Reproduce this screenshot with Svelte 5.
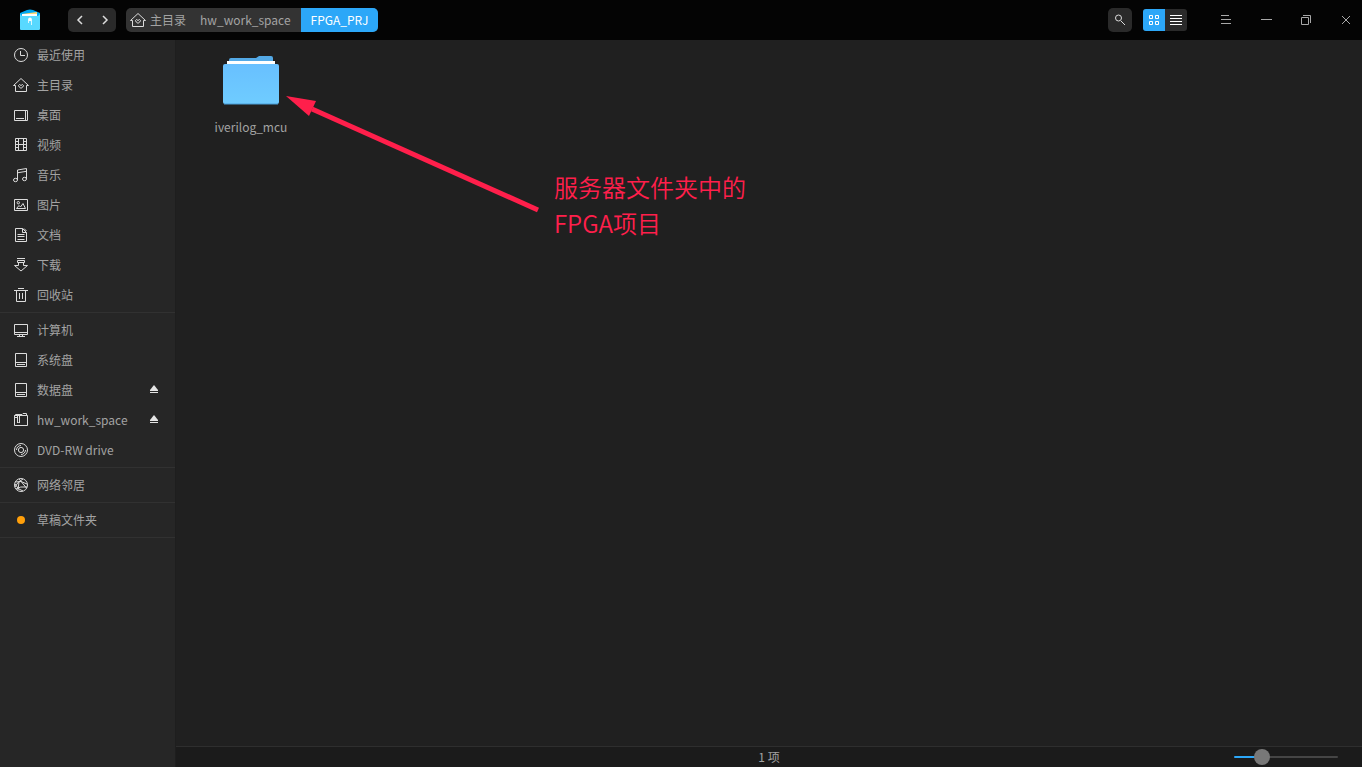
<script lang="ts">
  type Place = { label: string; icon: string; ejectable?: boolean }

  const groups: Place[][] = [
    [
      { label: '最近使用', icon: 'recent' },
      { label: '主目录', icon: 'home' },
      { label: '桌面', icon: 'desktop' },
      { label: '视频', icon: 'video' },
      { label: '音乐', icon: 'music' },
      { label: '图片', icon: 'picture' },
      { label: '文档', icon: 'document' },
      { label: '下载', icon: 'download' },
      { label: '回收站', icon: 'trash' },
    ],
    [
      { label: '计算机', icon: 'computer' },
      { label: '系统盘', icon: 'disk' },
      { label: '数据盘', icon: 'disk', ejectable: true },
      { label: 'hw_work_space', icon: 'share', ejectable: true },
      { label: 'DVD-RW drive', icon: 'dvd' },
    ],
    [{ label: '网络邻居', icon: 'network' }],
    [{ label: '草稿文件夹', icon: 'tag' }],
  ]

  // Line icons, one path each on a 16px grid.
  const icons: Record<string, string> = {
    recent: 'M14.5 8a6.5 6.5 0 1 1-13 0a6.5 6.5 0 1 1 13 0M7.5 4v4.5H12',
    home: 'M.5 8.5L8 1.5L15.5 8.5H13.5V14.5H2.5V8.5ZM5.5 8.5L6.5 7.5L8 8.5L9.5 7.5L10.5 8.5L9.8 10L8 11.3L6.2 10Z',
    desktop: 'M1.5 3.5h13v10h-13zM12.5 3.5v10M3 11.5h8',
    video: 'M2.5 1.5h11v12h-11zM5.5 1.5v12M10.5 1.5v12M5.5 7.5h5M2.5 4.5h3M2.5 7.5h3M2.5 10.5h3M10.5 4.5h3M10.5 7.5h3M10.5 10.5h3',
    music: 'M4.5 13a2 1.7 0 1 1-4 0a2 1.7 0 1 1 4 0V3L13.5 1.5V12a2 1.7 0 1 1-4 0a2 1.7 0 1 1 4 0M4.5 5.8L13.5 4.3',
    picture: 'M1.5 2.5h13v11h-13zM6.5 5.7a1.2 1.2 0 1 1-2.4 0a1.2 1.2 0 1 1 2.4 0M3.5 11.5L6 8.5L7.5 10L10 6.5L12.5 11.5Z',
    document: 'M9.5 1.5H2.5V14.5H13.5V5.5L9.5 1.5V5.5H13.5M4.5 7.5h7M4.5 9.5h7M4.5 12.5h7M11 1.5L13.5 4',
    download: 'M4 1.5h8M4.5 3.5h7v2h-7zM5.500 5.500V8.500H1.500L8 14L14.500 8.500H10.500V5.500',
    trash: 'M5 1.5h6M1 3.5h14M3.5 3.5v11h9v-11M6.5 6v6M9.5 6v6',
    computer: 'M1.5 2.5h13v10h-13zM1.5 10.5h13M6.5 12.5v2M9.5 12.5v2M4 14.5h8',
    disk: 'M2.5 1.5h11v13h-11zM2.5 10.5h11M4 12.5h8',
    share: 'M1.5 3.5h13v10h-13zM1.5 3.5L2.5 2.5H9L10 1.5H13.5V3.5M4.5 4v7L5.5 10L6.5 11V4M1.5 5.5h3',
    dvd: 'M14.5 8a6.5 6.5 0 1 1-13 0a6.5 6.5 0 1 1 13 0M10.6 8a2.6 2.6 0 1 1-5.2 0a2.6 2.6 0 1 1 5.2 0M3.5 8A4.5 4.5 0 0 1 8 3.5M12.5 8A4.5 4.5 0 0 1 8 12.5',
    network: 'M14.5 8a6.5 6.5 0 1 1-13 0a6.5 6.5 0 1 1 13 0M6 2L13.500 11M10 2Q4 5 2 10M2 5Q8 3 14 7M3 12Q7 9 14 10M2 7Q5 13 10 14M6 5L5 13',
  }

  let zoom = $state(23)
  let view = $state('grid')
</script>

{#snippet glyph(name: string)}
  <svg class="glyph" viewBox="0 0 16 16" aria-hidden="true">
    {#if name === 'tag'}
      <circle class="tag" cx="8" cy="8" r="4" />
    {:else}
      <path d={icons[name]} />
    {/if}
  </svg>
{/snippet}

<div class="window">
  <header>
    <svg class="logo" viewBox="0 0 20 22" aria-hidden="true">
      <path d="M0 4L7 1Q10 0 13 1L20 4V10H0Z" fill="#00a8f3" />
      <path d="M2 5L17 3V8H2Z" fill="#ffd978" />
      <path d="M2 5H17V8H2Z" fill="#fff" />
      <path d="M0 5L2 7H18L20 5V20Q20 21 19 21H1Q0 21 0 20Z" fill="#58d9ff" />
      <path d="M8.5 14V10.5A1.5 1.5 0 0 1 11.5 10.5V16" fill="none" stroke="#d8f7ff" />
      <circle cx="10" cy="10.5" r="1.7" fill="#fff" />
    </svg>

    <div class="history">
      <button aria-label="后退"><svg viewBox="0 0 16 16"><path d="M10 4L6 8L10 12" /></svg></button>
      <button aria-label="前进"><svg viewBox="0 0 16 16"><path d="M7 4L11 8L7 12" /></svg></button>
    </div>

    <nav class="crumbs">
      <a class="root" href="#home">{@render glyph('home')}主目录</a>
      <a href="#hw_work_space">hw_work_space</a>
      <a class="current" href="#fpga">FPGA_PRJ</a>
    </nav>

    <button class="search" aria-label="搜索">
      <svg viewBox="0 0 16 16"><circle cx="6.5" cy="6" r="3" /><path d="M9 9L13 13" /></svg>
    </button>

    <div class="views">
      <button class:active={view === 'grid'} aria-label="图标视图" onclick={() => (view = 'grid')}>
        <svg viewBox="0 0 16 16"><path d="M3.5 3.5h3v3h-3zM9.5 3.5h3v3h-3zM3.5 9.5h3v3h-3zM9.5 9.5h3v3h-3z" /></svg>
      </button>
      <button class:active={view === 'list'} aria-label="列表视图" onclick={() => (view = 'list')}>
        <svg viewBox="0 0 16 16"><path d="M2 3.5h12M2 6.5h12M2 9.5h12M2 12.5h12" /></svg>
      </button>
    </div>

    <div class="controls">
      <button aria-label="菜单"><svg viewBox="0 0 16 16"><path d="M3 3.5h8M3 7.5h10M3 11.5h10" /></svg></button>
      <button aria-label="最小化"><svg viewBox="0 0 16 16"><path d="M3 7.5h11" /></svg></button>
      <button aria-label="还原"><svg viewBox="0 0 16 16"><path d="M3.5 5.5h7v7h-7zM5 3.5h7.5V11" /></svg></button>
      <button aria-label="关闭"><svg viewBox="0 0 16 16"><path d="M4 4L12 12M12 4L4 12" /></svg></button>
    </div>
  </header>

  <div class="body">
    <aside>
      {#each groups as group}
        <ul>
          {#each group as place}
            <li>
              <a href="#{place.label}">{@render glyph(place.icon)}{place.label}</a>
              {#if place.ejectable}
                <button class="eject" aria-label="弹出 {place.label}">
                  <svg viewBox="0 0 10 10"><path d="M5 0L9 5V6H1V5Z" /><path d="M1 7H9V8H1Z" /></svg>
                </button>
              {/if}
            </li>
          {/each}
        </ul>
      {/each}
    </aside>

    <main>
      <div class="files">
        <button class="file">
          <svg viewBox="0 0 56 49" aria-hidden="true">
            <defs>
              <linearGradient id="folder" x1="0" y1="0" x2="0" y2="1">
                <stop offset="0" stop-color="#68c0ff" />
                <stop offset="1" stop-color="#6fccff" />
              </linearGradient>
            </defs>
            <path d="M6 8V4Q6 2 8 2H33L36 0H48Q50 0 50 2V8Z" fill="#53a9e6" />
            <path d="M4 5H52V9H4Z" fill="#fff" />
            <path d="M2 8H54Q56 8 56 10V46Q56 48 54 48H2Q0 48 0 46V10Q0 8 2 8Z" fill="url(#folder)" />
            <path d="M1 48H55" stroke="#4a9fd8" />
          </svg>
          iverilog_mcu
        </button>
      </div>

      <!-- Callout pointing at the project folder -->
      <div class="note">
        <svg viewBox="0 0 254 118" aria-hidden="true">
          <path d="M26 13L252 114" stroke="#ff1f4b" stroke-width="5" />
          <path d="M0 0L30 5L23 20Z" fill="#ff1f4b" />
        </svg>
        <p>服务器文件夹中的<br />FPGA项目</p>
      </div>

      <footer>
        <span>1 项</span>
        <input type="range" min="0" max="100" aria-label="图标大小" bind:value={zoom} style:--fill="{zoom}%" />
      </footer>
    </main>
  </div>
</div>

<style>
  :global(body) {
    background: #202020;
  }

  .window {
    display: flex;
    flex-direction: column;
    min-height: 100vh;
    color: #a3a3a3;
    font: 12px/20px 'Noto Sans CJK SC', sans-serif;
  }

  button {
    display: flex;
    align-items: center;
    justify-content: center;
    padding: 0;
    border: 0;
    background: none;
    color: inherit;
    font: inherit;
  }

  a {
    color: inherit;
    text-decoration: none;
  }

  svg {
    display: block;
    flex: none;
  }

  header svg,
  .glyph {
    width: 16px;
    height: 16px;
    fill: none;
    stroke: #dcdcdc;
  }

  header {
    display: flex;
    align-items: center;
    height: 40px;
    padding: 0 4px 0 20px;
    box-sizing: border-box;
    background: #040404;
  }

  header .logo {
    width: 20px;
    height: 22px;
    stroke: none;
  }

  .history {
    display: flex;
    margin: 0 10px 0 28px;
    border-radius: 5px;
    background: #2a2a2a;
  }

  .history button {
    width: 24px;
    height: 24px;
  }

  .history path {
    stroke-width: 1.5;
  }

  .crumbs {
    display: flex;
    overflow: hidden;
    border-radius: 5px;
    background: #333;
    line-height: 24px;
  }

  .crumbs a {
    padding: 0 10px;
  }

  .crumbs .root {
    display: flex;
    align-items: center;
    gap: 4px;
    padding: 0 4px;
  }

  .crumbs .current {
    background: #2ca7f8;
    color: #fff;
  }

  .search {
    width: 24px;
    height: 24px;
    margin: 0 11px 0 auto;
    border-radius: 5px;
    background: #2a2a2a;
  }

  .views {
    display: flex;
    overflow: hidden;
    border-radius: 3px;
    background: #2a2a2a;
  }

  .views button {
    width: 22px;
    height: 22px;
  }

  .views .active {
    background: #2ca7f8;
  }

  .views svg {
    stroke: #fff;
  }

  .controls {
    display: flex;
    gap: 16px;
    margin-left: 27px;
  }

  .controls button {
    width: 24px;
    height: 24px;
  }

  .controls svg {
    stroke: #a8a8a8;
  }

  .body {
    display: flex;
    flex: 1;
  }

  aside {
    width: 175px;
    flex: none;
    border-right: 1px solid #1e1e1e;
    background: #262626;
  }

  ul {
    margin: 0;
    padding: 0 0 2px;
    border-bottom: 1px solid #313131;
    list-style: none;
  }

  ul + ul {
    padding-top: 2px;
  }

  li {
    display: flex;
    align-items: center;
    height: 30px;
    padding: 0 16px 0 13px;
  }

  li a {
    display: flex;
    align-items: center;
    flex: 1;
    gap: 8px;
  }

  .tag {
    fill: #ff9f0a;
    stroke: none;
  }

  .eject svg {
    width: 10px;
    height: 10px;
    fill: #e4e4e4;
  }

  main {
    position: relative;
    display: flex;
    flex: 1;
    flex-direction: column;
  }

  .files {
    flex: 1;
    padding: 16px 20px;
  }

  .file {
    flex-direction: column;
    width: 110px;
    gap: 12px;
  }

  .file svg {
    width: 56px;
    height: 49px;
  }

  .note {
    position: absolute;
    top: 56px;
    left: 110px;
    display: flex;
    gap: 14px;
  }

  .note svg {
    width: 254px;
    height: 118px;
  }

  .note p {
    margin: 73px 0 0;
    color: #ff1f4b;
    font: 350 24px/36px 'Noto Sans CJK SC', sans-serif;
  }

  footer {
    display: grid;
    grid-template-columns: 1fr auto 1fr;
    align-items: center;
    padding: 0 24px;
    border-top: 1px solid #2e2e2e;
    background: #1b1b1b;
  }

  footer span {
    grid-column: 2;
  }

  input {
    width: 104px;
    height: 16px;
    margin: 0;
    justify-self: end;
    appearance: none;
    background: none;
  }

  input::-webkit-slider-runnable-track {
    height: 2px;
    border-radius: 1px;
    background: linear-gradient(to right, #2ca7f8 var(--fill), #454545 var(--fill));
  }

  input::-webkit-slider-thumb {
    width: 16px;
    height: 16px;
    margin-top: -7px;
    appearance: none;
    border-radius: 50%;
    background: #787878;
  }
</style>
